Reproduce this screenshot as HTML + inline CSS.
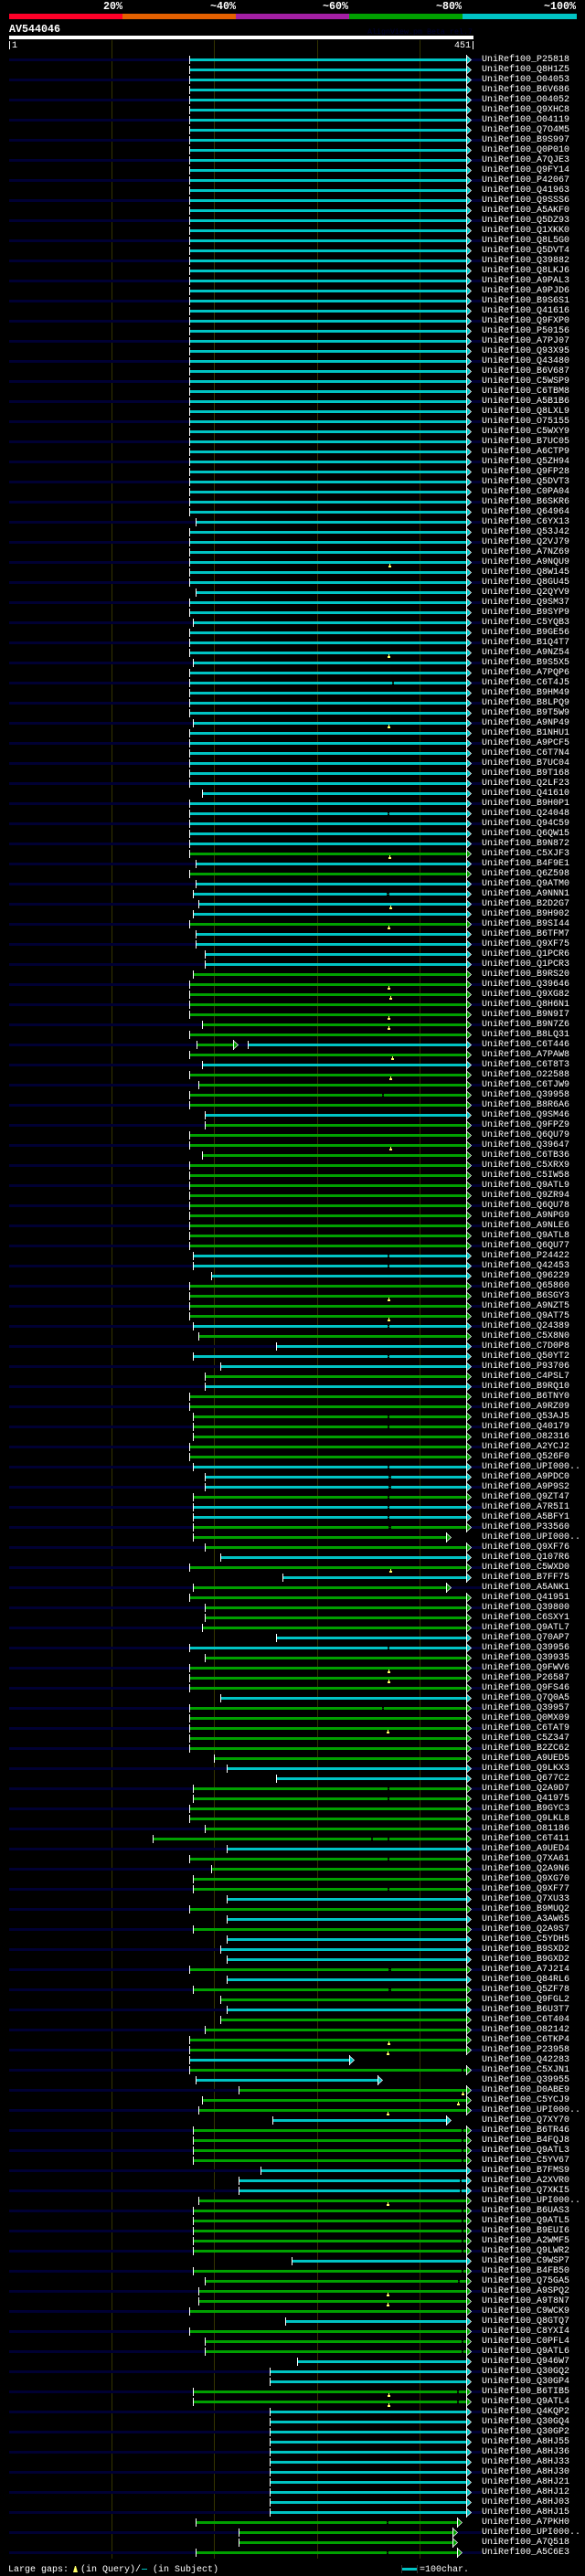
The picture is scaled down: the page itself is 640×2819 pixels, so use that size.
<!DOCTYPE html>
<html><head><meta charset="utf-8"><title>AV544046</title>
<style>
html,body{margin:0;padding:0;background:#000}
body{position:relative;width:640px;height:2819px;overflow:hidden;font:10px/11px "Liberation Mono",monospace;color:#fff}
.a{position:absolute;white-space:pre}
.h{font:bold 11.67px/13px "Liberation Mono",monospace}
.gl{position:absolute;top:44px;width:1px;height:2756px;background:#330}
#rows{position:absolute;left:0;top:60px;width:640px}
p{position:relative;margin:0;height:11px;padding-left:527px;width:113px;white-space:pre;--s:207;--e:510}
p:nth-child(odd){background:linear-gradient(#003,#003) 10px 4px/517px 3px no-repeat}
.c{--k:#00c4c4;--d:#064}
.g{--k:#00a000;--d:#040}
b{position:absolute;left:0;top:0;width:640px;height:11px;--e:510}
p::before,b::before{content:"";position:absolute;left:calc(var(--s)*1px);width:calc((var(--e) - var(--s))*1px);top:1px;height:9px;background:linear-gradient(#fff,#fff) 0 0/1px 9px no-repeat,linear-gradient(var(--k),var(--k)) 0 3px/100% 3px no-repeat}
p::after,b::after{content:"";position:absolute;left:calc(var(--e)*1px);top:0;width:6px;height:11px;background:#fff;clip-path:polygon(0 0,1px 0,1px 1px,6px 5.5px,1px 10px,1px 11px,0 11px)}
i{position:absolute;z-index:1;left:calc(var(--e)*1px + 1px);top:2px;width:4px;height:7px;background:var(--k);clip-path:polygon(0 0,100% 50%,0 100%)}
u{position:absolute;left:calc(var(--x)*1px);top:4px;width:calc(var(--w,2)*1px);height:3px;background:linear-gradient(var(--d),var(--d)) 0 1px/100% 1px no-repeat #000}
s{position:absolute;left:calc(var(--x)*1px);top:7px;width:3px;height:4px;background:linear-gradient(#ff6,#ff6) 1px 0/1px 2px no-repeat,linear-gradient(#ff6,#ff6) 0 2px/3px 2px no-repeat}
</style></head><body>
<div class="a h" style="left:113px;top:1px">20%</div>
<div class="a h" style="left:230px;top:1px">~40%</div>
<div class="a h" style="left:353px;top:1px">~60%</div>
<div class="a h" style="left:477px;top:1px">~80%</div>
<div class="a h" style="left:595px;top:1px">~100%</div>
<div class="a" style="left:10px;top:15px;width:124px;height:6px;background:#ff0028"></div>
<div class="a" style="left:134px;top:15px;width:124px;height:6px;background:#e46000"></div>
<div class="a" style="left:258px;top:15px;width:124px;height:6px;background:#a31fa3"></div>
<div class="a" style="left:382px;top:15px;width:124px;height:6px;background:#00a000"></div>
<div class="a" style="left:506px;top:15px;width:125px;height:6px;background:#00c4c4"></div>
<div class="a h" style="left:10px;top:26px">AV544046</div>
<div class="a" style="left:402px;top:30px;font-size:8.33px;line-height:10px;color:#003">AlignView.pm Beta rel.7</div>
<div class="a" style="left:10px;top:39px;width:508px;height:4px;background:#fff"></div>
<div class="a" style="left:10px;top:45px;width:1px;height:9px;background:#fff"></div>
<div class="a" style="left:13px;top:45px">1</div>
<div class="a" style="left:497px;top:45px">451</div>
<div class="a" style="left:517px;top:45px;width:1px;height:9px;background:#fff"></div>
<div class="gl" style="left:122px"></div><div class="gl" style="left:234px"></div><div class="gl" style="left:347px"></div><div class="gl" style="left:459px"></div>
<div id="rows">
<p class=c><i></i>UniRef100_P25818</p>
<p class=c><i></i>UniRef100_Q8H1Z5</p>
<p class=c><i></i>UniRef100_O04053</p>
<p class=c><i></i>UniRef100_B6V686</p>
<p class=c><i></i>UniRef100_O04052</p>
<p class=c><i></i>UniRef100_Q9XHC8</p>
<p class=c><i></i>UniRef100_O04119</p>
<p class=c><i></i>UniRef100_Q7O4M5</p>
<p class=c><i></i>UniRef100_B9S997</p>
<p class=c><i></i>UniRef100_Q0P010</p>
<p class=c><i></i>UniRef100_A7QJE3</p>
<p class=c><i></i>UniRef100_Q9FY14</p>
<p class=c><i></i>UniRef100_P42067</p>
<p class=c><i></i>UniRef100_Q41963</p>
<p class=c><i></i>UniRef100_Q9SSS6</p>
<p class=c><i></i>UniRef100_A5AKF0</p>
<p class=c><i></i>UniRef100_Q5DZ93</p>
<p class=c><i></i>UniRef100_Q1XKK0</p>
<p class=c><i></i>UniRef100_Q8L5G0</p>
<p class=c><i></i>UniRef100_Q5DVT4</p>
<p class=c><i></i>UniRef100_Q39882</p>
<p class=c><i></i>UniRef100_Q8LKJ6</p>
<p class=c><i></i>UniRef100_A9PAL3</p>
<p class=c><i></i>UniRef100_A9PJD6</p>
<p class=c><i></i>UniRef100_B9S6S1</p>
<p class=c><i></i>UniRef100_Q41616</p>
<p class=c><i></i>UniRef100_Q9FXP0</p>
<p class=c><i></i>UniRef100_P50156</p>
<p class=c><i></i>UniRef100_A7PJ07</p>
<p class=c><i></i>UniRef100_Q93X95</p>
<p class=c><i></i>UniRef100_Q43480</p>
<p class=c><i></i>UniRef100_B6V687</p>
<p class=c><i></i>UniRef100_C5WSP9</p>
<p class=c><i></i>UniRef100_C6TBM8</p>
<p class=c><i></i>UniRef100_A5B1B6</p>
<p class=c><i></i>UniRef100_Q8LXL9</p>
<p class=c><i></i>UniRef100_O75155</p>
<p class=c><i></i>UniRef100_C5WXY9</p>
<p class=c><i></i>UniRef100_B7UC05</p>
<p class=c><i></i>UniRef100_A6CTP9</p>
<p class=c><i></i>UniRef100_Q5ZH94</p>
<p class=c><i></i>UniRef100_Q9FP28</p>
<p class=c><i></i>UniRef100_Q5DVT3</p>
<p class=c><i></i>UniRef100_C0PA04</p>
<p class=c><i></i>UniRef100_B6SKR6</p>
<p class=c><i></i>UniRef100_Q64964</p>
<p class=c style=--s:214><i></i>UniRef100_C6YX13</p>
<p class=c><i></i>UniRef100_Q53J42</p>
<p class=c><i></i>UniRef100_Q2VJ79</p>
<p class=c><i></i>UniRef100_A7NZ69</p>
<p class=c><i></i><s style=--x:425></s>UniRef100_A9NQU9</p>
<p class=c><i></i>UniRef100_Q8W145</p>
<p class=c><i></i>UniRef100_Q8GU45</p>
<p class=c style=--s:214><i></i>UniRef100_Q2QYV9</p>
<p class=c><i></i>UniRef100_Q9SM37</p>
<p class=c><i></i>UniRef100_B9SYP9</p>
<p class=c style=--s:211><i></i>UniRef100_C5YQB3</p>
<p class=c><i></i>UniRef100_B9GE56</p>
<p class=c><i></i>UniRef100_B1Q4T7</p>
<p class=c><i></i><s style=--x:424></s>UniRef100_A9NZ54</p>
<p class=c style=--s:211><i></i>UniRef100_B9S5X5</p>
<p class=c><i></i>UniRef100_A7PQP6</p>
<p class=c><i></i><u style=--x:429></u>UniRef100_C6T4J5</p>
<p class=c><i></i>UniRef100_B9HM49</p>
<p class=c><i></i>UniRef100_B8LPQ9</p>
<p class=c><i></i>UniRef100_B9T5W9</p>
<p class=c style=--s:211><i></i><s style=--x:424></s>UniRef100_A9NP49</p>
<p class=c><i></i>UniRef100_B1NHU1</p>
<p class=c><i></i>UniRef100_A9PCF5</p>
<p class=c><i></i>UniRef100_C6T7N4</p>
<p class=c><i></i>UniRef100_B7UC04</p>
<p class=c><i></i>UniRef100_B9T168</p>
<p class=c><i></i>UniRef100_Q2LF23</p>
<p class=c style=--s:221><i></i>UniRef100_Q41610</p>
<p class=c><i></i>UniRef100_B9H0P1</p>
<p class=c><i></i><u style=--x:424></u>UniRef100_Q24048</p>
<p class=c><i></i>UniRef100_Q94C59</p>
<p class=c><i></i>UniRef100_Q6QW15</p>
<p class=c><i></i>UniRef100_B9N872</p>
<p class=g><i></i><s style=--x:425></s>UniRef100_C5XJF3</p>
<p class=c style=--s:214><i></i>UniRef100_B4F9E1</p>
<p class=g><i></i>UniRef100_Q6Z598</p>
<p class=c style=--s:214><i></i>UniRef100_Q9ATM0</p>
<p class=c style=--s:211><i></i><u style=--x:423;--w:3></u>UniRef100_A9NNN1</p>
<p class=c style=--s:217><i></i><s style=--x:426></s>UniRef100_B2D2G7</p>
<p class=c style=--s:211><i></i>UniRef100_B9H902</p>
<p class=g><i></i><s style=--x:424></s>UniRef100_B9SI44</p>
<p class=c style=--s:214><i></i>UniRef100_B6TFM7</p>
<p class=c style=--s:214><i></i>UniRef100_Q9XF75</p>
<p class=c style=--s:224><i></i>UniRef100_Q1PCR6</p>
<p class=c style=--s:224><i></i>UniRef100_Q1PCR3</p>
<p class=g style=--s:211><i></i>UniRef100_B9RS20</p>
<p class=g><i></i><s style=--x:424></s>UniRef100_Q39646</p>
<p class=g><i></i><s style=--x:426></s>UniRef100_Q9XG82</p>
<p class=g><i></i>UniRef100_Q8H6N1</p>
<p class=g><i></i><s style=--x:424></s>UniRef100_B9N9I7</p>
<p class=g style=--s:221><i></i><s style=--x:424></s>UniRef100_B9N7Z6</p>
<p class=g><i></i>UniRef100_B8LQ31</p>
<p class=g style="--s:215;--e:255"><i></i><b class=c style=--s:271><i></i></b>UniRef100_C6T446</p>
<p class=g><i></i><s style=--x:428></s>UniRef100_A7PAW8</p>
<p class=c style=--s:221><i></i>UniRef100_C6T8T3</p>
<p class=g><i></i><s style=--x:426></s>UniRef100_O22588</p>
<p class=g style=--s:217><i></i>UniRef100_C6TJW9</p>
<p class=g><i></i><u style=--x:418></u>UniRef100_Q39958</p>
<p class=g><i></i>UniRef100_B8R6A6</p>
<p class=c style=--s:224><i></i>UniRef100_Q9SM46</p>
<p class=g style=--s:224><i></i>UniRef100_Q9FPZ9</p>
<p class=g><i></i>UniRef100_Q6QU79</p>
<p class=g><i></i><s style=--x:426></s>UniRef100_Q39647</p>
<p class=g style=--s:221><i></i>UniRef100_C6TB36</p>
<p class=g><i></i>UniRef100_C5XRX9</p>
<p class=g><i></i>UniRef100_C5IW58</p>
<p class=g><i></i>UniRef100_Q9ATL9</p>
<p class=g><i></i>UniRef100_Q9ZR94</p>
<p class=g><i></i>UniRef100_Q6QU78</p>
<p class=g><i></i>UniRef100_A9NPG9</p>
<p class=g><i></i>UniRef100_A9NLE6</p>
<p class=g><i></i>UniRef100_Q9ATL8</p>
<p class=g><i></i>UniRef100_Q6QU77</p>
<p class=c style=--s:211><i></i><u style=--x:424></u>UniRef100_P24422</p>
<p class=c style=--s:211><i></i><u style=--x:424></u>UniRef100_Q42453</p>
<p class=c style=--s:231><i></i>UniRef100_Q96229</p>
<p class=g><i></i>UniRef100_Q65860</p>
<p class=g><i></i><s style=--x:424></s>UniRef100_B6SGY3</p>
<p class=g><i></i>UniRef100_A9NZT5</p>
<p class=g><i></i><s style=--x:424></s>UniRef100_Q9AT75</p>
<p class=c style=--s:211><i></i><u style=--x:424></u>UniRef100_Q24389</p>
<p class=g style=--s:217><i></i>UniRef100_C5X8N0</p>
<p class=c style=--s:302><i></i>UniRef100_C7D0P8</p>
<p class=c style=--s:211><i></i><u style=--x:424></u>UniRef100_Q50YT2</p>
<p class=c style=--s:241><i></i>UniRef100_P93706</p>
<p class=g style=--s:224><i></i>UniRef100_C4PSL7</p>
<p class=c style=--s:224><i></i>UniRef100_B9RQ10</p>
<p class=g><i></i>UniRef100_B6TNY0</p>
<p class=g><i></i>UniRef100_A9RZ09</p>
<p class=g style=--s:211><i></i><u style=--x:424></u>UniRef100_Q53AJ5</p>
<p class=g style=--s:211><i></i><u style=--x:424></u>UniRef100_Q40179</p>
<p class=g style=--s:211><i></i>UniRef100_O82316</p>
<p class=g><i></i>UniRef100_A2YCJ2</p>
<p class=g><i></i>UniRef100_Q526F0</p>
<p class=c style=--s:211><i></i><u style=--x:424></u>UniRef100_UPI000..</p>
<p class=c style=--s:224><i></i><u style=--x:425;--w:3></u>UniRef100_A9PDC0</p>
<p class=c style=--s:224><i></i><u style=--x:425;--w:3></u>UniRef100_A9P9S2</p>
<p class=g style=--s:211><i></i><u style=--x:424></u>UniRef100_Q9ZT47</p>
<p class=c style=--s:211><i></i><u style=--x:424></u>UniRef100_A7R5I1</p>
<p class=c style=--s:211><i></i><u style=--x:424></u>UniRef100_A5BFY1</p>
<p class=g style=--s:211><i></i><u style=--x:425;--w:3></u>UniRef100_P33560</p>
<p class=g style="--s:211;--e:488"><i></i>UniRef100_UPI000..</p>
<p class=g style=--s:224><i></i>UniRef100_Q9XF76</p>
<p class=c style=--s:241><i></i>UniRef100_Q107R6</p>
<p class=g><i></i><s style=--x:426></s>UniRef100_C5WXD0</p>
<p class=c style=--s:309><i></i>UniRef100_B7FF75</p>
<p class=g style="--s:211;--e:488"><i></i>UniRef100_A5ANK1</p>
<p class=g><i></i>UniRef100_Q41951</p>
<p class=g style=--s:224><i></i>UniRef100_Q39800</p>
<p class=g style=--s:224><i></i>UniRef100_C6SXY1</p>
<p class=g style=--s:221><i></i>UniRef100_Q9ATL7</p>
<p class=c style=--s:302><i></i>UniRef100_Q70AP7</p>
<p class=c><i></i><u style=--x:424></u>UniRef100_Q39956</p>
<p class=g style=--s:224><i></i>UniRef100_Q39935</p>
<p class=g><i></i><s style=--x:424></s>UniRef100_Q9FWV6</p>
<p class=g><i></i><s style=--x:424></s>UniRef100_P26587</p>
<p class=g><i></i>UniRef100_Q9FS46</p>
<p class=c style=--s:241><i></i>UniRef100_Q7Q0A5</p>
<p class=g><i></i><u style=--x:418></u>UniRef100_Q39957</p>
<p class=g><i></i>UniRef100_Q0MX09</p>
<p class=g><i></i><s style=--x:423></s>UniRef100_C6TAT9</p>
<p class=g><i></i>UniRef100_C5Z347</p>
<p class=g><i></i>UniRef100_B2ZC62</p>
<p class=g style=--s:234><i></i>UniRef100_A9UED5</p>
<p class=c style=--s:248><i></i>UniRef100_Q9LKX3</p>
<p class=c style=--s:302><i></i>UniRef100_Q677C2</p>
<p class=g style=--s:211><i></i><u style=--x:424></u>UniRef100_Q2A9D7</p>
<p class=g style=--s:211><i></i><u style=--x:424></u>UniRef100_Q41975</p>
<p class=g><i></i>UniRef100_B9GYC3</p>
<p class=g><i></i>UniRef100_Q9LKL8</p>
<p class=g style=--s:224><i></i>UniRef100_O81186</p>
<p class=g style=--s:167><i></i><u style=--x:406></u><u style=--x:424></u>UniRef100_C6T411</p>
<p class=c style=--s:248><i></i>UniRef100_A9UED4</p>
<p class=g><i></i><u style=--x:424></u>UniRef100_Q7XA61</p>
<p class=g style=--s:231><i></i>UniRef100_Q2A9N6</p>
<p class=g style=--s:211><i></i>UniRef100_Q9XG70</p>
<p class=g style=--s:211><i></i><u style=--x:424></u>UniRef100_Q9XF77</p>
<p class=c style=--s:248><i></i>UniRef100_Q7XU33</p>
<p class=g><i></i>UniRef100_B9MUQ2</p>
<p class=c style=--s:248><i></i>UniRef100_A3AW65</p>
<p class=g style=--s:211><i></i>UniRef100_Q2A9S7</p>
<p class=c style=--s:248><i></i>UniRef100_C5YDH5</p>
<p class=c style=--s:241><i></i>UniRef100_B9SXD2</p>
<p class=c style=--s:248><i></i>UniRef100_B9GXD2</p>
<p class=g><i></i><u style=--x:425;--w:3></u>UniRef100_A7J2I4</p>
<p class=c style=--s:248><i></i>UniRef100_Q84RL6</p>
<p class=g style=--s:211><i></i><u style=--x:425;--w:3></u>UniRef100_Q5ZF78</p>
<p class=g style=--s:241><i></i>UniRef100_Q9FGL2</p>
<p class=c style=--s:248><i></i>UniRef100_B6U3T7</p>
<p class=g style=--s:241><i></i>UniRef100_C6T404</p>
<p class=g style=--s:224><i></i>UniRef100_O82142</p>
<p class=g><i></i><s style=--x:424></s>UniRef100_C6TKP4</p>
<p class=g><i></i><s style=--x:423></s>UniRef100_P23958</p>
<p class=c style=--e:382><i></i>UniRef100_Q42283</p>
<p class=g><i></i><u style=--x:505></u>UniRef100_C5XJN1</p>
<p class=c style="--s:214;--e:413"><i></i>UniRef100_Q39955</p>
<p class=g style=--s:261><i></i><s style=--x:505></s>UniRef100_D0ABE9</p>
<p class=g style=--s:221><i></i><s style=--x:500></s>UniRef100_C5YCJ9</p>
<p class=g style=--s:217><i></i><s style=--x:423></s>UniRef100_UPI000..</p>
<p class=c style="--s:298;--e:488"><i></i>UniRef100_Q7XY70</p>
<p class=g style=--s:211><i></i><u style=--x:505></u>UniRef100_B6TR46</p>
<p class=g style=--s:211><i></i><u style=--x:505></u>UniRef100_B4FQJ8</p>
<p class=g style=--s:211><i></i><u style=--x:505></u>UniRef100_Q9ATL3</p>
<p class=g style=--s:211><i></i><u style=--x:505></u>UniRef100_C5YV67</p>
<p class=c style=--s:285><i></i>UniRef100_B7FMS9</p>
<p class=c style=--s:261><i></i><u style=--x:503></u>UniRef100_A2XVR0</p>
<p class=c style=--s:261><i></i><u style=--x:503></u>UniRef100_Q7XKI5</p>
<p class=g style=--s:217><i></i><s style=--x:423></s>UniRef100_UPI000..</p>
<p class=g style=--s:211><i></i><u style=--x:505></u>UniRef100_B6UAS3</p>
<p class=g style=--s:211><i></i><u style=--x:505></u>UniRef100_Q9ATL5</p>
<p class=g style=--s:211><i></i><u style=--x:505></u>UniRef100_B9EUI6</p>
<p class=g style=--s:211><i></i><u style=--x:505></u>UniRef100_A2WMF5</p>
<p class=g style=--s:211><i></i><u style=--x:505></u>UniRef100_Q9LWR2</p>
<p class=c style=--s:319><i></i>UniRef100_C9WSP7</p>
<p class=g style=--s:211><i></i><u style=--x:505></u>UniRef100_B4FB50</p>
<p class=g style=--s:224><i></i><u style=--x:501></u>UniRef100_Q75GA5</p>
<p class=g style=--s:217><i></i><s style=--x:423></s>UniRef100_A9SPQ2</p>
<p class=g style=--s:217><i></i><s style=--x:423></s>UniRef100_A9T8N7</p>
<p class=g><i></i>UniRef100_C9WCK9</p>
<p class=c style=--s:312><i></i>UniRef100_Q8GTQ7</p>
<p class=g><i></i>UniRef100_C8YXI4</p>
<p class=g style=--s:224><i></i><u style=--x:505></u>UniRef100_C0PFL4</p>
<p class=g style=--s:224><i></i><u style=--x:505></u>UniRef100_Q9ATL6</p>
<p class=c style=--s:325><i></i>UniRef100_Q946W7</p>
<p class=c style=--s:295><i></i>UniRef100_Q30GQ2</p>
<p class=c style=--s:295><i></i>UniRef100_Q30GP4</p>
<p class=g style=--s:211><i></i><u style=--x:500></u><s style=--x:424></s>UniRef100_B6TIB5</p>
<p class=g style=--s:211><i></i><u style=--x:500></u><s style=--x:424></s>UniRef100_Q9ATL4</p>
<p class=c style=--s:295><i></i>UniRef100_Q4KQP2</p>
<p class=c style=--s:295><i></i>UniRef100_Q30GQ4</p>
<p class=c style=--s:295><i></i>UniRef100_Q30GP2</p>
<p class=c style=--s:295><i></i>UniRef100_A8HJ55</p>
<p class=c style=--s:295><i></i>UniRef100_A8HJ36</p>
<p class=c style=--s:295><i></i>UniRef100_A8HJ33</p>
<p class=c style=--s:295><i></i>UniRef100_A8HJ30</p>
<p class=c style=--s:295><i></i>UniRef100_A8HJ21</p>
<p class=c style=--s:295><i></i>UniRef100_A8HJ12</p>
<p class=c style=--s:295><i></i>UniRef100_A8HJ03</p>
<p class=c style=--s:295><i></i>UniRef100_A8HJ15</p>
<p class=g style="--s:214;--e:500"><i></i><u style=--x:423></u>UniRef100_A7PKH0</p>
<p class=g style="--s:261;--e:495"><i></i>UniRef100_UPI000..</p>
<p class=g style="--s:261;--e:495"><i></i>UniRef100_A7Q518</p>
<p class=g style="--s:214;--e:500"><i></i><u style=--x:423></u>UniRef100_A5C6E3</p>
</div>
<div class="a" style="left:9px;top:2807px">Large gaps:</div>
<div class="a" style="left:80px;top:2808px;width:5px;height:7px;background:#ff6;clip-path:polygon(40% 0,60% 0,100% 100%,0 100%)"></div>
<div class="a" style="left:88px;top:2807px">(in Query)/</div>
<div class="a" style="left:155px;top:2811px;width:6px;height:1px;background:#00c4c4"></div>
<div class="a" style="left:167px;top:2807px">(in Subject)</div>
<div class="a" style="left:439px;top:2807px;width:1px;height:9px;background:#333"></div>
<div class="a" style="left:440px;top:2810px;width:16px;height:3px;background:#00c4c4"></div>
<div class="a" style="left:456px;top:2807px;width:1px;height:9px;background:#333"></div>
<div class="a" style="left:459px;top:2807px">=100char.</div>
</body></html>
